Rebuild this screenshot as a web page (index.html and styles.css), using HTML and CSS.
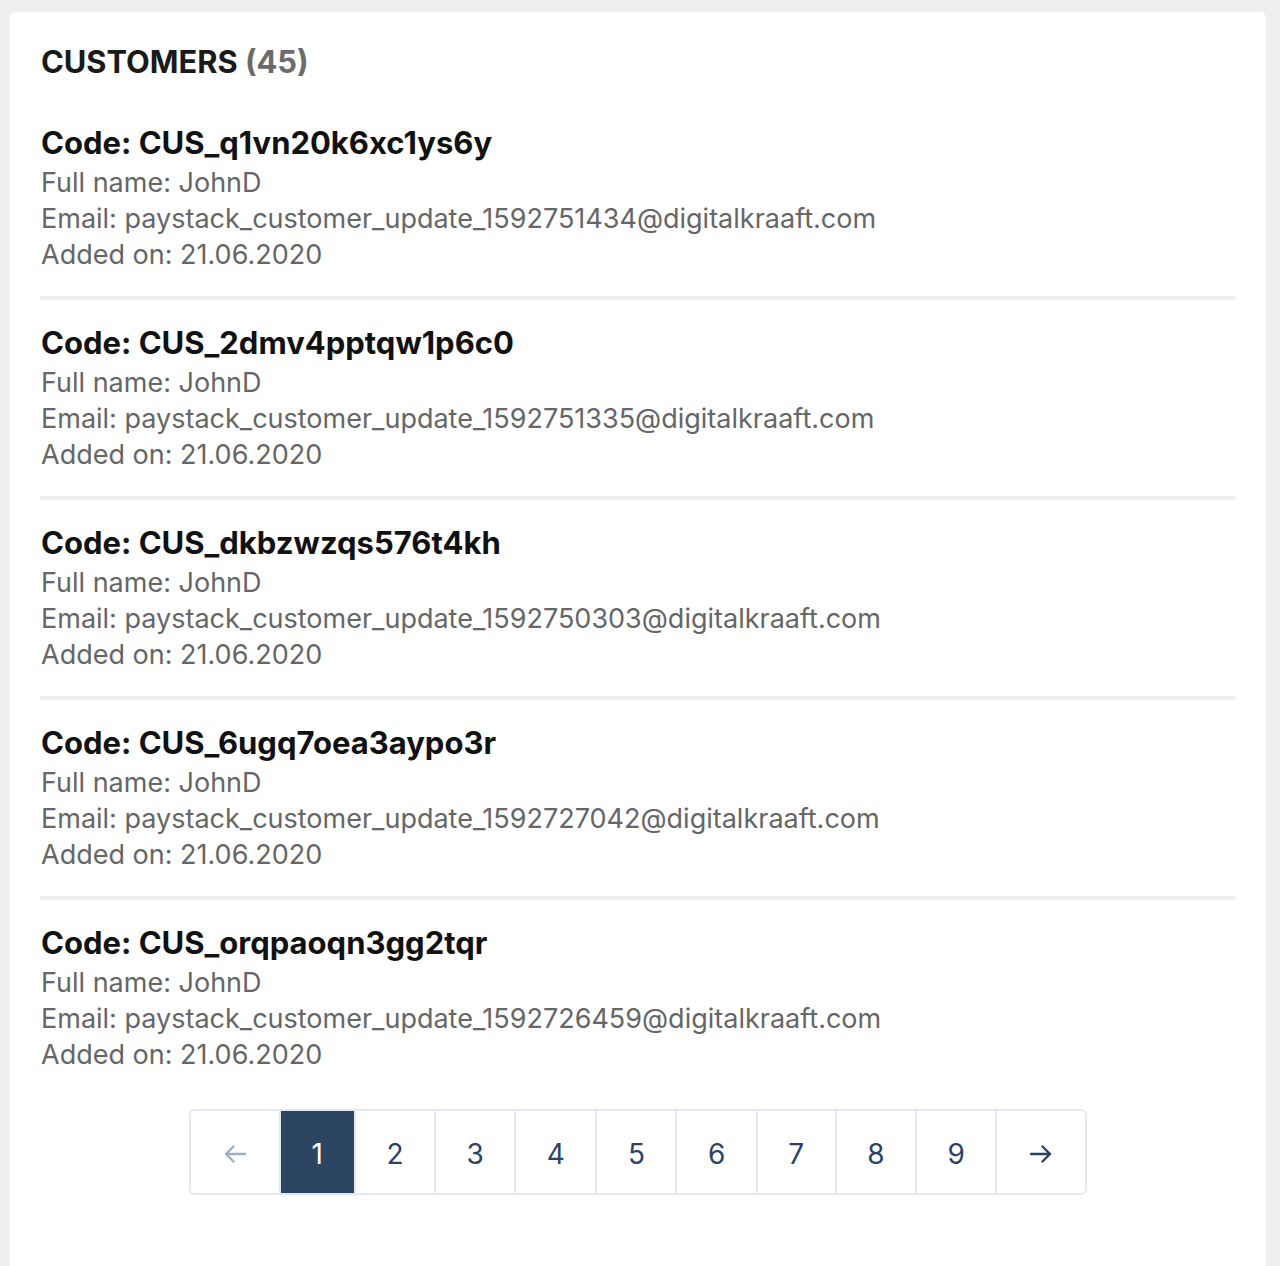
FILE: index.html
```html
<!DOCTYPE html>
<html lang="en">
<head>
<meta charset="utf-8">
<title>Customers</title>
<link rel="stylesheet" href="styles.css">
</head>
<body>
<main class="card">
  <h1 class="title">CUSTOMERS <span class="count">(45)</span></h1>
  <ul class="list">
    <li class="item">
      <h2 class="code">Code: CUS_q1vn20k6xc1ys6y</h2>
      <p class="line">Full name: JohnD</p>
      <p class="line">Email: paystack_customer_update_1592751434@digitalkraaft.com</p>
      <p class="line">Added on: 21.06.2020</p>
    </li>
    <li class="item">
      <h2 class="code">Code: CUS_2dmv4pptqw1p6c0</h2>
      <p class="line">Full name: JohnD</p>
      <p class="line">Email: paystack_customer_update_1592751335@digitalkraaft.com</p>
      <p class="line">Added on: 21.06.2020</p>
    </li>
    <li class="item">
      <h2 class="code">Code: CUS_dkbzwzqs576t4kh</h2>
      <p class="line">Full name: JohnD</p>
      <p class="line">Email: paystack_customer_update_1592750303@digitalkraaft.com</p>
      <p class="line">Added on: 21.06.2020</p>
    </li>
    <li class="item">
      <h2 class="code">Code: CUS_6ugq7oea3aypo3r</h2>
      <p class="line">Full name: JohnD</p>
      <p class="line">Email: paystack_customer_update_1592727042@digitalkraaft.com</p>
      <p class="line">Added on: 21.06.2020</p>
    </li>
    <li class="item">
      <h2 class="code">Code: CUS_orqpaoqn3gg2tqr</h2>
      <p class="line">Full name: JohnD</p>
      <p class="line">Email: paystack_customer_update_1592726459@digitalkraaft.com</p>
      <p class="line">Added on: 21.06.2020</p>
    </li>
  </ul>
  <nav class="pager">
    <a class="page arrow prev" aria-label="Previous"><svg class="ico" viewBox="0 0 22 18" width="22" height="18"><path d="M21 9H2M9.5 1.5L2 9l7.5 7.5" fill="none" stroke="currentColor" stroke-width="2.4" stroke-linecap="round" stroke-linejoin="round"/></svg></a>
    <a class="page active">1</a>
    <a class="page">2</a>
    <a class="page">3</a>
    <a class="page">4</a>
    <a class="page">5</a>
    <a class="page">6</a>
    <a class="page">7</a>
    <a class="page">8</a>
    <a class="page">9</a>
    <a class="page arrow next" aria-label="Next"><svg class="ico" viewBox="0 0 22 18" width="22" height="18"><path d="M1 9H20M12.5 1.5L20 9l-7.5 7.5" fill="none" stroke="currentColor" stroke-width="2.4" stroke-linecap="round" stroke-linejoin="round"/></svg></a>
  </nav>
</main>
</body>
</html>
```

FILE: styles.css
```css
html, body {
  margin: 0;
  padding: 0;
  background: #efefef;
}
body {
  font-family: Inter, "Noto Sans", sans-serif;
  padding: 12px 14px 0 10px;
  min-height: 1266px;
  box-sizing: border-box;
}
.card {
  background: #fff;
  border-radius: 6px 6px 0 0;
  padding: 32px 30px 70px 30px;
  min-height: 1254px;
  box-sizing: border-box;
}
.title {
  margin: 0 0 45px 1px;
  font-size: 30.8px;
  line-height: 36px;
  font-weight: 700;
  color: #1a1a1a;
}
.count {
  color: #6b6b6b;
}
.list {
  list-style: none;
  margin: 0;
  padding: 0;
}
.item {
  padding: 0 0 23px 1px;
  border-bottom: 4px solid #efefef;
  margin-bottom: 25px;
}
.item:last-child {
  border-bottom: none;
  margin-bottom: 0;
  padding-bottom: 0;
}
.code {
  margin: 0 0 4px 0;
  font-size: 31px;
  line-height: 36px;
  font-weight: 700;
  color: #111;
}
.line {
  margin: 0;
  font-size: 27px;
  line-height: 36px;
  color: #666;
}
.pager {
  display: flex;
  width: max-content;
  margin: 36px auto 0;
  border: 2px solid #e2e8f0;
  border-radius: 6px;
  overflow: hidden;
}
.page {
  display: flex;
  align-items: center;
  justify-content: center;
  box-sizing: border-box;
  height: 82px;
  padding: 3px 30.5px 0;
  font-size: 28px;
  color: #2a4365;
  border-left: 2px solid #e2e8f0;
}
.page:first-child {
  border-left: none;
}
.page.active {
  background: #2c4563;
  color: #fff;
  padding: 3px 31px 0;
}
.arrow {
  padding: 3px 33px 0;
}
.prev {
  color: #a0aec0;
}
.next {
  color: #2a4365;
}
.ico {
  display: block;
}
```
